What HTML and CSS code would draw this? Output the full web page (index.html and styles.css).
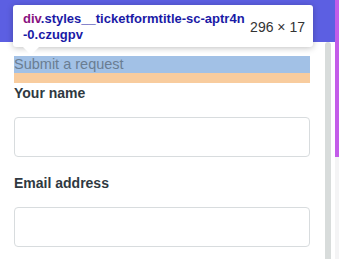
FILE: index.html
```html
<!DOCTYPE html>
<html lang="en">
  <head>
    <meta charset="UTF-8">
    <meta name="viewport" content="width=device-width, initial-scale=1">
    <title>Submit a request</title>
    <link rel="stylesheet" href="styles.css">
  </head>
  <body>
    <div class="page">
      <div class="widget">
        <div class="widget-header"></div>
        <div class="widget-body">
          <form class="ticket-form">
            <div class="ticket-title-box">
              <div class="ticket-title">Submit a request</div>
            </div>
            <div class="field">
              <label class="field-label">Your name</label>
              <div class="field-input"></div>
            </div>
            <div class="field">
              <label class="field-label">Email address</label>
              <div class="field-input"></div>
            </div>
          </form>
          <div class="scroll-thumb"></div>
        </div>
      </div>
      <div class="side-strip">
        <div class="side-strip-top"></div>
      </div>

      <!-- devtools inspect tooltip -->
      <div class="inspect-tip">
        <div class="inspect-name"><span class="tag">div</span><span class="cls">.styles__ticketformtitle-sc-aptr4n<br>-0.czugpv</span></div>
        <div class="inspect-size">296 × 17</div>
        <div class="inspect-arrow"></div>
      </div>
    </div>
  </body>
</html>
```

FILE: styles.css
```css
body {
  margin: 0;
  padding: 0;
  overflow: hidden;
  background: #fff;
  font-family: "Liberation Sans", Arial, sans-serif;
}

.page {
  position: relative;
  display: flex;
  width: 339px;
  height: 259px;
  overflow: hidden;
}

.widget {
  width: 335px;
  display: flex;
  flex-direction: column;
  background: #fff;
}

.widget-header {
  flex-shrink: 0;
  height: 42px;
  background: #5c5fe2;
}

.widget-body {
  flex: 1;
  display: flex;
  min-height: 0;
}

.ticket-form {
  flex-shrink: 0;
  width: 296px;
  padding: 14px 0 0 14px;
}

.ticket-title-box {
  background: #f8cc9e;
  padding-bottom: 10px;
}

.ticket-title {
  height: 17px;
  line-height: 17px;
  font-size: 14.5px;
  color: #6a7d92;
  background: #a2c1e6;
}

.field {
  margin-bottom: 16px;
}

.field-label {
  display: block;
  font-size: 14px;
  line-height: 20px;
  font-weight: 700;
  color: #2f3941;
  margin-bottom: 14px;
}

.field-input {
  height: 38px;
  border: 1px solid #d8dcde;
  border-radius: 4px;
  background: #fff;
}

.scroll-thumb {
  width: 6px;
  margin-left: 15px;
  background: #d8dcdb;
  border-radius: 3px 3px 0 0;
}

.side-strip {
  width: 4px;
  background: #f4f4f5;
}

.side-strip-top {
  height: 157px;
  background: #c35ce9;
}

.inspect-tip {
  position: absolute;
  top: 5px;
  left: 13px;
  width: 300px;
  height: 42px;
  box-sizing: border-box;
  padding: 1px 8px 0 10px;
  display: flex;
  align-items: center;
  justify-content: space-between;
  background: #fff;
  border-radius: 3px;
  box-shadow: 0 1px 6px rgba(0, 0, 0, 0.25);
  font-size: 13px;
  line-height: 16px;
}

.inspect-name {
  font-weight: 700;
}

.inspect-name .tag {
  color: #881280;
}

.inspect-name .cls {
  color: #1a1aa6;
}

.inspect-size {
  color: #333;
  font-size: 14px;
}

.inspect-arrow {
  position: absolute;
  left: 10px;
  bottom: -8px;
  width: 0;
  height: 0;
  border-left: 8px solid transparent;
  border-right: 8px solid transparent;
  border-top: 8px solid #fff;
}
```
